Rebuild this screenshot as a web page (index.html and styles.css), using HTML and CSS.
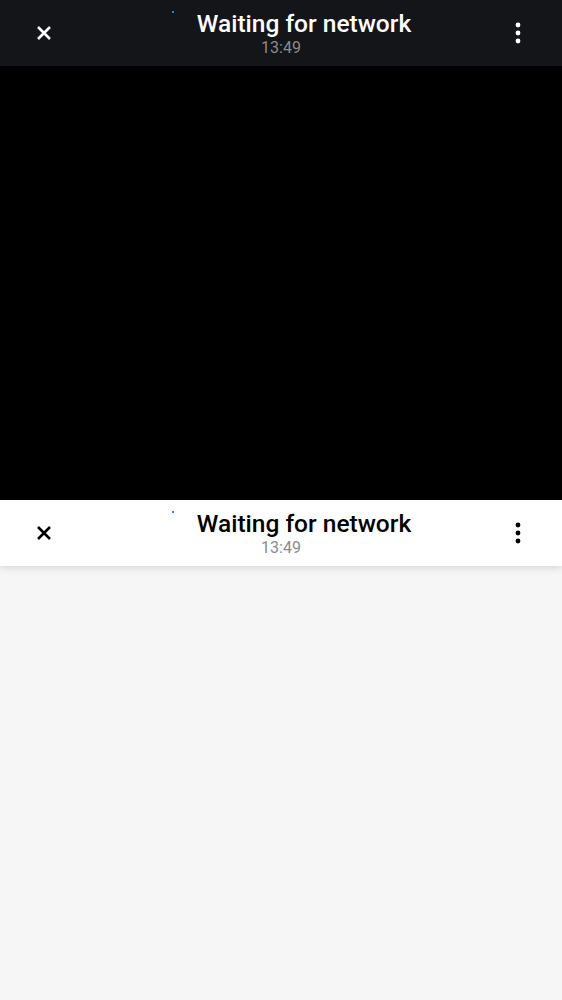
FILE: index.html
```html
<!DOCTYPE html>
<html>
<head>
<meta charset="utf-8">
<link rel="stylesheet" href="styles.css">
</head>
<body>
<div class="app">
  <header class="bar bar-dark">
    <button class="icon-btn" aria-label="Close">
      <svg width="20" height="20" viewBox="0 0 20 20"><path d="M4 4L16 16M16 4L4 16" stroke="currentColor" stroke-width="2.6" stroke-linecap="butt"/></svg>
    </button>
    <div class="center">
      <div class="title-row">
        <span class="spinner"><span class="dot"></span></span>
        <span class="title">Waiting for network</span>
      </div>
      <div class="time">13:49</div>
    </div>
    <button class="icon-btn" aria-label="More">
      <svg width="6" height="22" viewBox="0 0 6 22"><circle cx="3" cy="3" r="2.4" fill="currentColor"/><circle cx="3" cy="11" r="2.4" fill="currentColor"/><circle cx="3" cy="19" r="2.4" fill="currentColor"/></svg>
    </button>
  </header>
  <div class="media"></div>
  <header class="bar bar-light">
    <button class="icon-btn" aria-label="Close">
      <svg width="20" height="20" viewBox="0 0 20 20"><path d="M4 4L16 16M16 4L4 16" stroke="currentColor" stroke-width="2.6" stroke-linecap="butt"/></svg>
    </button>
    <div class="center">
      <div class="title-row">
        <span class="spinner"><span class="dot"></span></span>
        <span class="title">Waiting for network</span>
      </div>
      <div class="time">13:49</div>
    </div>
    <button class="icon-btn" aria-label="More">
      <svg width="6" height="22" viewBox="0 0 6 22"><circle cx="3" cy="3" r="2.4" fill="currentColor"/><circle cx="3" cy="11" r="2.4" fill="currentColor"/><circle cx="3" cy="19" r="2.4" fill="currentColor"/></svg>
    </button>
  </header>
  <div class="content"></div>
</div>
</body>
</html>
```
FILE: styles.css
```css
* { box-sizing: border-box; }
html, body { margin: 0; padding: 0; }
body {
  font-family: Roboto, "Noto Sans", sans-serif;
  background: #f6f6f6;
}
.app {
  display: flex;
  flex-direction: column;
  min-height: 1000px;
}
.bar {
  height: 66px;
  display: flex;
  align-items: center;
  position: relative;
  z-index: 1;
}
.bar-dark {
  background: #141518;
  color: #ffffff;
}
.bar-light {
  background: #ffffff;
  color: #000000;
  box-shadow: 0 1px 8px rgba(0, 0, 0, 0.16);
}
.icon-btn {
  width: 88px;
  height: 66px;
  border: 0;
  padding: 0;
  background: transparent;
  color: inherit;
  display: flex;
  align-items: center;
  justify-content: center;
}
.center {
  flex: 1;
  display: flex;
  flex-direction: column;
  align-items: center;
}
.title-row {
  display: flex;
  align-items: flex-start;
  height: 28px;
}
.spinner {
  width: 46px;
  height: 28px;
  position: relative;
}
.dot {
  position: absolute;
  left: 21px;
  top: 1px;
  width: 2px;
  height: 2px;
  background: #2f7cf6;
}
.title {
  font-size: 24.5px;
  font-weight: 500;
  line-height: 28px;
  white-space: nowrap;
}
.time {
  margin-top: 1px;
  font-size: 16px;
  line-height: 18px;
  color: #8a8b8e;
}
.bar-light .time { color: #8b8b8b; }
.media {
  height: 434px;
  background: #000000;
}
.content {
  flex: 1;
  background: #f6f6f6;
}
```
